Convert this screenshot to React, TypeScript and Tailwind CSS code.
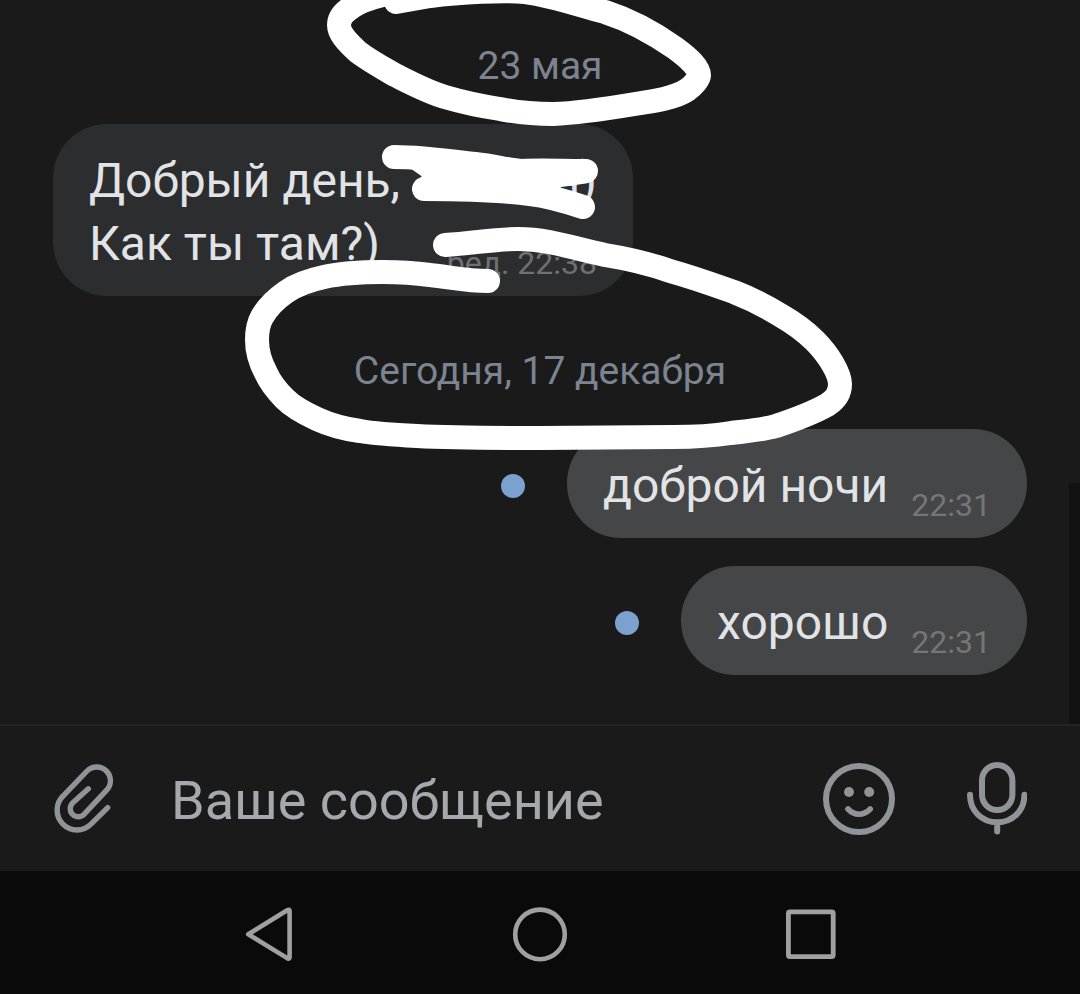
import type { ReactNode } from 'react';

const days = [
  {
    date: '23 мая',
    messages: [{ lines: ['Добрый день,', 'Как ты там?)'], tail: 'н)', time: 'ред. 22:38', mine: false }],
  },
  {
    date: 'Сегодня, 17 декабря',
    messages: [
      { lines: ['доброй ночи'], tail: '', time: '22:31', mine: true },
      { lines: ['хорошо'], tail: '', time: '22:31', mine: true },
    ],
  },
];

type Message = (typeof days)[number]['messages'][number];

function Incoming({ message }: { message: Message }) {
  return (
    <div className="w-[580px] max-w-full self-start rounded-[54px] bg-[#2c2d2e] px-9 pt-[25px] pb-[21px]">
      <p className="flex justify-between text-5xl leading-[63px] text-[#e1e3e6]">
        <span>{message.lines[0]}</span>
        <span>{message.tail}</span>
      </p>
      <div className="flex items-end justify-between">
        <p className="text-5xl leading-[63px] text-[#e1e3e6]">{message.lines[1]}</p>
        <span className="-mb-1.5 text-[32px] leading-9 text-[#6f7072]">{message.time}</span>
      </div>
    </div>
  );
}

function Outgoing({ message }: { message: Message }) {
  return (
    <div className="flex items-center gap-[42px] self-end">
      <span className="mt-1 size-6 rounded-full bg-[#7ba1cf]" />
      <div className="flex items-end gap-[23px] rounded-[54px] bg-[#454647] px-9 pt-[25px] pb-[21px]">
        <p className="text-5xl leading-[63px] text-[#e1e3e6]">{message.lines[0]}</p>
        <span className="-mb-1.5 text-[32px] leading-9 text-[#757678]">{message.time}</span>
      </div>
    </div>
  );
}

// Marker strokes over the conversation
function Marker() {
  return (
    <svg
      className="pointer-events-none absolute top-0 left-0"
      width="1080"
      height="724"
      viewBox="0 0 1080 724"
      fill="none"
      stroke="#fff"
      strokeWidth="24"
      strokeLinecap="round"
      strokeLinejoin="round"
      aria-hidden="true"
    >
      <path d="M396 2L430 -4C460 -8 505 -10 525 -8C550 -5 575 4 605 12C630 20 655 34 675 48C690 59 699 68 699 75C699 79 693 86 687 90C675 98 655 101 635 104C605 109 580 113 553 114C530 114 515 112 500 109C480 106 462 102 445 97C428 92 411 83 395 75C381 67 370 61 358 52C346 41 339 33 339 25C339 17 344 12 352 7C360 1 370 -2 382 -5" />
      <path d="M394 157C420 157 450 161 475 164C495 166 508 170 522 171C540 170 560 171 586 171C578 173 565 174 555 176C500 178 460 174 424 189C455 189 500 190 530 194C548 196 568 202 583 207" />
      <path d="M394 157L430 161L470 174L540 178L470 184L424 189L430 182Z" fill="#fff" stroke="none" />
      <path d="M412 165L440 165L440 182L418 180L425 173Z" fill="#fff" stroke="none" />
      <path d="M436 174L470 176L540 178L470 184Z" fill="#fff" />
      <path d="M445 245C475 243 495 239 518 239C550 239 575 249 605 255C630 259 650 264 670 271C695 278 714 285 734 292C752 299 767 307 780 315C794 323 806 332 815 341C829 355 840 374 840 384C840 394 835 400 827 405C811 414 794 420 776 426C762 430 748 431 731 433C712 436 692 437 673 437C630 437 585 438 540 438C500 438 455 438 417 436C397 435 377 434 360 431C345 429 330 425 317 419C304 413 293 407 285 399C277 391 270 382 266 373C260 362 257 351 257 340C257 331 258 324 262 317C267 308 276 299 286 292C297 284 310 280 324 277C342 273 362 272 383 272C400 272 415 273 430 275C450 277 467 281 488 281" />
    </svg>
  );
}

function IconButton({ label, children }: { label: string; children: ReactNode }) {
  return (
    <button type="button" aria-label={label} className="shrink-0">
      {children}
    </button>
  );
}

function Composer() {
  return (
    <form
      className="flex items-center border-t-2 border-[#242425] py-8 pr-[53px] pl-[54px] text-[#909499]"
      onSubmit={(e) => e.preventDefault()}
    >
      <IconButton label="Прикрепить">
        <svg width="60" height="69" viewBox="0 0 60 69" fill="none" stroke="currentColor" strokeWidth="5.4" strokeLinecap="round">
          <path d="M53.7 43.7L37 60.2A19.8 19.8 0 0 1 9 32L33 7A13.7 13.7 0 0 1 52.4 26.4L30 50.4A8 8 0 0 1 18.6 39L34.3 24.8" />
        </svg>
      </IconButton>
      <input
        type="text"
        aria-label="Ваше сообщение"
        placeholder="Ваше сообщение"
        className="ml-[57px] h-[81px] min-w-0 flex-1 bg-transparent pt-1 text-[54px] text-[#e1e3e6] outline-none placeholder:text-[#a6a8ae]"
      />
      <div className="flex items-center gap-[72px]">
        <IconButton label="Смайлы">
          <svg width="72" height="72" viewBox="0 0 72 72" fill="none" stroke="currentColor" strokeWidth="6" strokeLinecap="round">
            <circle cx="36" cy="36" r="33" />
            <circle cx="26" cy="29" r="5" fill="currentColor" stroke="none" />
            <circle cx="46.2" cy="29" r="5" fill="currentColor" stroke="none" />
            <path d="M25 46C31.5 53 40.5 53 47.2 46" strokeWidth="5.6" />
          </svg>
        </IconButton>
        <IconButton label="Голосовое сообщение">
          <svg width="60" height="73" viewBox="0 0 60 73" fill="none" stroke="currentColor" strokeWidth="6" strokeLinecap="round">
            <rect x="15" y="3" width="30.4" height="45" rx="15.2" />
            <path d="M3 32.7C3 49 15 60.3 30.2 60.3S57.4 49 57.4 32.7M30.2 60.3V69.6" />
          </svg>
        </IconButton>
      </div>
    </form>
  );
}

function NavBar() {
  return (
    <nav className="grid grid-cols-3 justify-items-center bg-[#0a0a0a] px-[12.5%] pt-[34px] pb-[29px] text-[#a0a0a0]">
      <IconButton label="Назад">
        <svg width="60" height="60" viewBox="0 0 60 60" fill="none" stroke="currentColor" strokeWidth="4.6" strokeLinejoin="round">
          <path d="M8.3 29.2L47.6 5Q49.6 4 49.6 6.2V52.2Q49.6 54.4 47.6 53.4Z" />
        </svg>
      </IconButton>
      <IconButton label="Домой">
        <svg width="60" height="60" viewBox="0 0 60 60" fill="none" stroke="currentColor" strokeWidth="4.6">
          <circle cx="30" cy="29.4" r="24.8" />
        </svg>
      </IconButton>
      <IconButton label="Недавние">
        <svg width="60" height="60" viewBox="0 0 60 60" fill="none" stroke="currentColor" strokeWidth="4.8">
          <rect x="8.4" y="6.8" width="44.8" height="44.8" rx="1.5" />
        </svg>
      </IconButton>
    </nav>
  );
}

export default function App() {
  return (
    <div className="flex min-h-screen flex-col overflow-hidden bg-[#1a1a1a] font-[Roboto,sans-serif]">
      <main className="relative flex flex-1 flex-col gap-[52px] px-[53px] pt-[43px] pb-12">
        {days.map((day) => (
          <section key={day.date} className="flex flex-col gap-7">
            <h2 className="-mb-7 pb-[35px] text-center text-[39px] leading-[46px] text-[#7b8490]">{day.date}</h2>
            {day.messages.map((m) =>
              m.mine ? <Outgoing key={m.lines[0]} message={m} /> : <Incoming key={m.lines[0]} message={m} />
            )}
          </section>
        ))}
        <div className="absolute right-0 bottom-0 h-[241px] w-[11px] bg-[#121212]" />
        <Marker />
      </main>
      <Composer />
      <NavBar />
    </div>
  );
}
